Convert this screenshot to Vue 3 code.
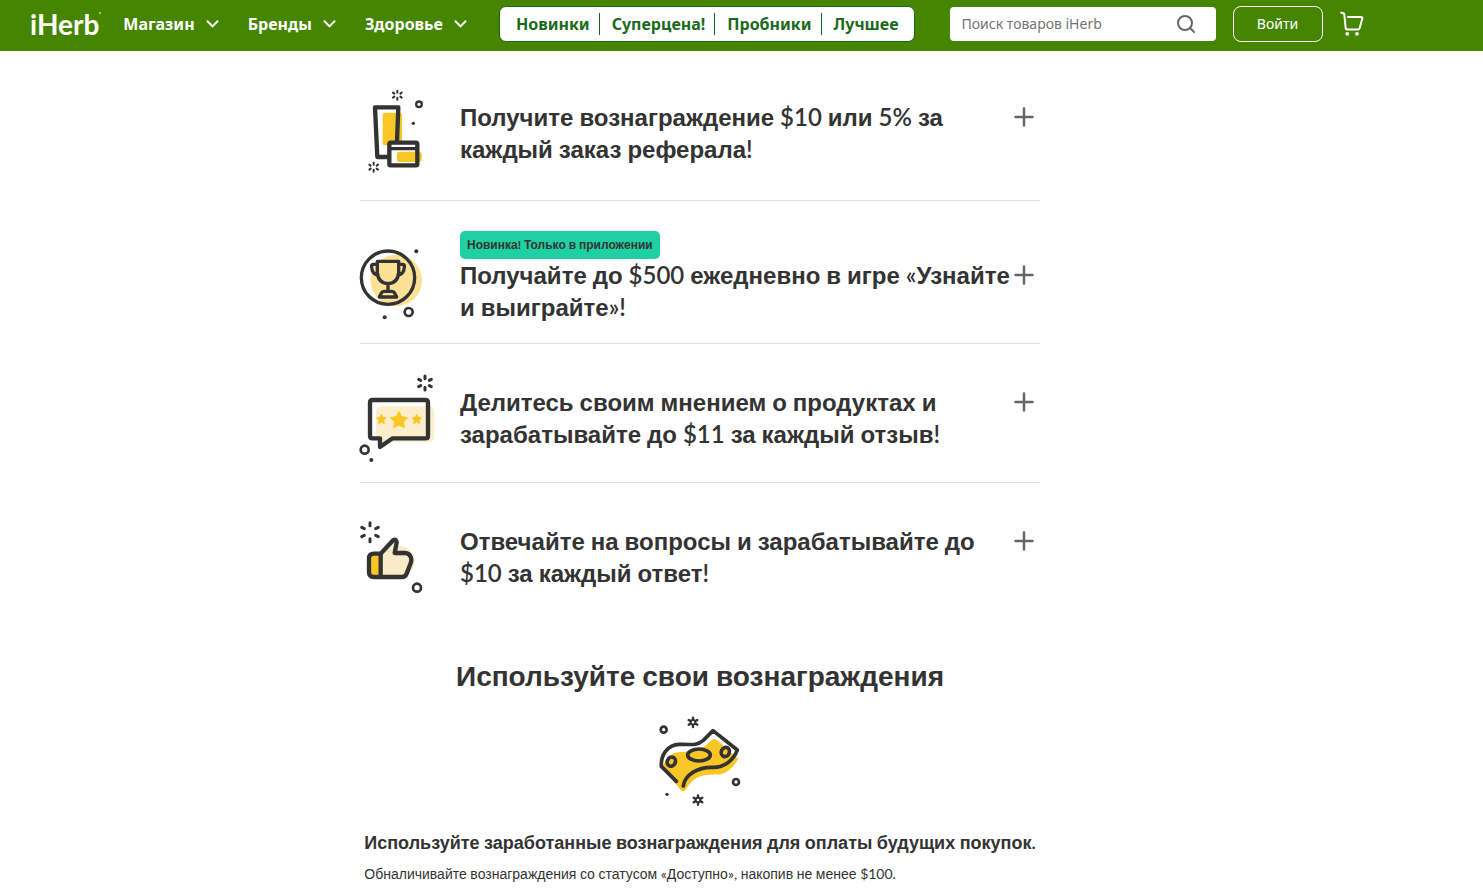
<script setup>
const menus = ['Магазин', 'Бренды', 'Здоровье']
const quickLinks = ['Новинки', 'Суперцена!', 'Пробники', 'Лучшее']

const rewards = [
  { id: 'referral', title: 'Получите вознаграждение $10 или 5% за каждый заказ реферала!' },
  {
    id: 'trophy',
    title: 'Получайте до $500 ежедневно в игре «Узнайте и выиграйте»!',
    badge: 'Новинка! Только в приложении',
  },
  { id: 'review', title: 'Делитесь своим мнением о продуктах и зарабатывайте до $11 за каждый отзыв!' },
  { id: 'answer', title: 'Отвечайте на вопросы и зарабатывайте до $10 за каждый ответ!' },
]

const heading = 'Используйте свои вознаграждения'
const lead = 'Используйте заработанные вознаграждения для оплаты будущих покупок.'
const note = 'Обналичивайте вознаграждения со статусом «Доступно», накопив не менее $100.'

// Splits a string into Cyrillic words and everything else, so each gets its own typeface.
function runs(text) {
  return text
    .split(/([А-Яа-яЁё]+)/)
    .filter(Boolean)
    .map((t) => ({ t, cyr: /[А-Яа-яЁё]/.test(t) }))
}
</script>

<template>
  <div class="page">
    <header class="header">
      <div class="bar">
        <a class="logo" href="#" aria-label="iHerb">iHerb<i class="reg"></i></a>
        <nav class="menus">
          <button v-for="m in menus" :key="m" class="menu" type="button">
            <span>{{ m }}</span>
            <svg class="chev" viewBox="0 0 12 8"><path d="M1 1.2 6 6.4 11 1.2" /></svg>
          </button>
        </nav>
        <nav class="quick">
          <a v-for="q in quickLinks" :key="q" class="quick-link" href="#">{{ q }}</a>
        </nav>
        <form class="search" @submit.prevent>
          <input class="search-input" type="text" placeholder="Поиск товаров iHerb" aria-label="Поиск товаров iHerb" />
          <button class="search-btn" type="submit" aria-label="Поиск">
            <svg class="search-icon" viewBox="0 0 20 20"><circle cx="9" cy="9" r="7" /><path d="M14 14 18 18" /></svg>
          </button>
        </form>
        <button class="signin" type="button">Войти</button>
        <a class="cart" href="#" aria-label="Корзина">
          <svg class="cart-icon" viewBox="0 0 24 26">
            <path d="M1.2 1.6 3.4 2.2Q4.2 2.5 4.3 3.4L5.6 16.6Q5.8 18.6 7.6 18.6H17.8Q19.2 18.6 19.6 17.2L22.3 7.6Q22.6 6 21 6H8" />
            <circle class="wheel" cx="7.2" cy="22.8" r="1.9" /><circle class="wheel" cx="17" cy="22.8" r="1.9" />
          </svg>
        </a>
      </div>
    </header>

    <main class="main">
      <section class="column">
        <article v-for="r in rewards" :key="r.id" class="reward" :class="{ badged: r.badge }">
          <div class="art">
            <svg v-if="r.id === 'referral'" class="pic" viewBox="30 27 240 273">
              <rect x="98" y="98" width="58" height="98" rx="8" fill="#fac626" />
              <path d="M141 184 145 82H75L82 231H116" class="ln" stroke-width="13" />
              <rect x="118" y="188" width="84" height="68" rx="4" fill="#fff" />
              <rect x="141" y="215" width="74" height="31" rx="8" fill="#fac626" />
              <rect x="118" y="188" width="84" height="68" rx="4" class="ln" stroke-width="13" />
              <path d="M118 206H202" class="ln" stroke-width="10" />
              <circle cx="207" cy="73" r="8.5" class="ln" stroke-width="7" />
              <circle cx="190" cy="130" r="5" class="dot" />
              <path class="ln" stroke-width="6" d="M142 32v6M142 53v6M129 38l4 3M155 38l-4 3M129 53l4-3M155 53l-4-3" />
              <path class="ln" stroke-width="6" d="M71 248v6M71 269v6M58 254l4 3M84 254l-4 3M58 269l4-3M84 269l-4-3" />
            </svg>
            <svg v-else-if="r.id === 'trophy'" class="pic" viewBox="30 18 240 276">
              <circle cx="139" cy="166" r="77" fill="#fce093" />
              <circle cx="114" cy="158" r="80" class="ln" stroke-width="10" />
              <path class="ln" stroke-width="10" d="M82 109H146V143Q144 174 114 176 84 174 82 143ZM114 177V198M82 118H70Q64 118 65 126 66 148 84 150M146 118H158Q164 118 163 126 162 148 144 150M104 199H124Q132 199 135 206L140 216H88L93 206Q96 199 104 199Z" />
              <circle cx="199" cy="79" r="6" class="dot" />
              <circle cx="104" cy="277" r="6" class="dot" />
              <circle cx="176" cy="261" r="12" class="ln" stroke-width="8" />
            </svg>
            <svg v-else-if="r.id === 'review'" class="pic" viewBox="30 27 240 264">
              <rect x="78" y="124" width="174" height="107" rx="16" fill="#fdeecb" />
              <path class="ln" stroke-width="13" d="M128 220H227Q234 220 234 212V113Q234 105 226 105H68Q60 105 60 113V212Q60 220 68 220H90V246Z" />
              <path class="star" d="M147 139 155 155 173 158 160 171 163 188 147 180 131 188 134 171 121 158 139 155Z" />
              <path class="star" d="M94 148 99 157 108 159 101 166 103 176 94 171 85 176 87 166 80 159 89 157Z" />
              <path class="star" d="M200 148 205 157 214 159 207 166 209 176 200 171 191 176 193 166 186 159 195 157Z" />
              <path class="ln" stroke-width="9" d="M225 33v8M225 67v8M206 43l6 3M244 43l-6 3M206 65l6-3M244 65l-6-3" />
              <circle cx="44" cy="254" r="12" class="ln" stroke-width="8" />
              <circle cx="64" cy="285" r="6" class="dot" />
            </svg>
            <svg v-else class="pic" viewBox="30 9 240 270">
              <circle cx="148" cy="154" r="46" fill="#f9ebc8" />
              <path d="M94 134 124 92Q136 80 138 98L134 128H166Q190 132 184 154L170 190Q167 200 156 200H94Z" fill="#f9ebc8" />
              <path d="M92 131H68Q56 132 56 144V188Q56 200 68 201H92Z" fill="#fac626" />
              <path class="ln" stroke-width="13" d="M92 131H72Q57 131 57 146V187Q57 201 72 201H156Q166 201 170 191L183 157Q185 149 183 143 178 129 165 129H134L140 98Q139 86 130 90L92 131V200" />
              <path class="ln" stroke-width="9" d="M60 38v9M60 86v9M35 52l8 4M85 52l-8 4M35 80l8-4M85 80l-8-4" />
              <circle cx="201" cy="233" r="12" class="ln" stroke-width="8" />
            </svg>
          </div>
          <div class="copy">
            <span v-if="r.badge" class="badge"><span v-for="(s, i) in runs(r.badge)" :key="i" :class="{ cyr: s.cyr }">{{ s.t }}</span></span>
            <h3 class="title"><span v-for="(s, i) in runs(r.title)" :key="i" :class="{ cyr: s.cyr }">{{ s.t }}</span></h3>
          </div>
          <button class="toggle" type="button" :aria-label="r.title">
            <svg class="plus" viewBox="0 0 20 20"><path d="M10 1.5V18.5M1.5 10H18.5" /></svg>
          </button>
        </article>
      </section>

      <section class="use">
        <h2 class="heading"><span v-for="(s, i) in runs(heading)" :key="i" :class="{ cyr: s.cyr }">{{ s.t }}</span></h2>
        <svg class="money" viewBox="60 48 240 270">
          <path d="M66 202C86 158 104 156 134 155 184 156 198 134 216 120Q224 114 232 121L294 176C284 200 258 222 236 224 190 222 160 228 138 268Q132 278 122 270Z" fill="#fac626" />
          <path class="ln" stroke-width="11" d="M109 244 64 199C62 168 80 134 118 133 160 134 172 136 190 121L219 92 292 150C280 182 252 202 220 202 172 200 134 226 130 258" />
          <ellipse cx="177" cy="165" rx="34" ry="18" class="ln" stroke-width="11" />
          <ellipse cx="94" cy="185" rx="12" ry="14" class="ln" stroke-width="11" transform="rotate(25 94 185)" />
          <ellipse cx="256" cy="156" rx="12" ry="14" class="ln" stroke-width="11" transform="rotate(25 256 156)" />
          <circle cx="71" cy="89" r="9" class="ln" stroke-width="8" />
          <circle cx="288" cy="246" r="9" class="ln" stroke-width="8" />
          <circle cx="81" cy="283" r="5" class="dot" />
          <g v-for="p in ['translate(159 67)', 'translate(174 300)']" :key="p" :transform="p">
            <circle r="7" class="ln" stroke-width="6" />
            <path class="ln" stroke-width="7" d="M0-8V-14M0 8V14M-8-4l-5-3M8-4l5-3M-8 4l-5 3M8 4l5 3" />
          </g>
        </svg>
        <div class="text">
          <p class="lead"><span v-for="(s, i) in runs(lead)" :key="i" :class="{ cyr: s.cyr }">{{ s.t }}</span></p>
          <p class="note"><span v-for="(s, i) in runs(note)" :key="i" :class="{ cyr: s.cyr }">{{ s.t }}</span></p>
        </div>
      </section>
    </main>
  </div>
</template>

<style>
body {
  background: #fff;
}
</style>

<style scoped>
* {
  box-sizing: border-box;
}
.page {
  font-family: Lato, 'Liberation Sans', sans-serif;
  color: #333;
}
.cyr {
  font-family: 'Liberation Sans', sans-serif;
  line-height: 1;
}
button {
  margin: 0;
  padding: 0;
  border: 0;
  background: none;
  color: inherit;
  font: inherit;
  cursor: pointer;
}
a {
  color: inherit;
  text-decoration: none;
}
.header {
  background: #458500;
  color: #fff;
  font-family: 'Noto Sans', sans-serif;
}
.bar {
  display: flex;
  align-items: center;
  height: 51px;
  padding: 0 30px 4px;
}
.logo {
  display: flex;
  flex: 0 0 70px;
  margin-right: 22px;
  font: 700 28px/40px Lato, sans-serif;
}
.reg {
  flex: 0 0 2px;
  height: 2px;
  margin-top: 8px;
  border-radius: 50%;
  background: #c5dbac;
}
.menus {
  display: flex;
  gap: 29px;
  margin-right: 32px;
}
.menu {
  display: flex;
  align-items: center;
  gap: 11px;
  font-size: 16px;
  font-weight: 700;
  line-height: 24px;
}
.chev {
  width: 13px;
  height: 8px;
  fill: none;
  stroke: #fff;
  stroke-width: 2;
  stroke-linecap: round;
}
.quick {
  display: flex;
  align-items: center;
  height: 36px;
  padding: 0 6px 0 4px;
  border: 1px solid #1b6a1b;
  border-radius: 7px;
  background: #fff;
  color: #1b6a1b;
}
.quick-link {
  padding: 0 9px 0 12px;
  border-right: 1px solid #1b6a1b;
  font-size: 16px;
  font-weight: 700;
  line-height: 22px;
}
.quick-link:last-child {
  border-right: 0;
}
.search {
  display: flex;
  align-items: center;
  width: 266px;
  height: 34px;
  margin-left: 35px;
  padding-right: 20px;
  border-radius: 4px;
  background: #fff;
}
.search-input {
  flex: 1;
  min-width: 0;
  padding: 0 0 0 12px;
  border: 0;
  outline: 0;
  background: none;
  color: #333;
  font: 14px/20px 'Noto Sans', sans-serif;
}
.search-input::placeholder {
  color: #757575;
}
.search-icon {
  display: block;
  width: 20px;
  height: 20px;
  fill: none;
  stroke: #666;
  stroke-width: 2;
  stroke-linecap: round;
}
.signin {
  width: 90px;
  height: 36px;
  margin: 0 17px;
  border: 1px solid #fff;
  border-radius: 8px;
  font-size: 14px;
}
.cart-icon {
  display: block;
  width: 24px;
  height: 26px;
  fill: none;
  stroke: #fff;
  stroke-width: 2;
  stroke-linecap: round;
  stroke-linejoin: round;
}
.wheel {
  fill: #fff;
  stroke: none;
}
.main {
  max-width: 1400px;
  padding: 8px 20px 12px;
}
.column {
  max-width: 680px;
  margin: 0 auto;
}
.reward {
  display: flex;
  padding: 30px 0 20px;
  border-bottom: 1px solid #ddd;
}
.reward:last-child {
  border-bottom: 0;
}
.art {
  flex: 0 0 100px;
}
.pic {
  display: block;
  width: 80px;
  overflow: visible;
}
.ln {
  fill: none;
  stroke: #333;
  stroke-linecap: round;
  stroke-linejoin: round;
}
.dot {
  fill: #333;
}
.star {
  fill: #fac626;
  stroke: #fac626;
  stroke-width: 3;
  stroke-linejoin: round;
}
.copy {
  flex: 1;
  min-width: 0;
  padding-top: 12px;
}
.badged .copy {
  padding-top: 0;
}
.badge {
  display: block;
  width: fit-content;
  padding: 0 7px;
  border-radius: 5px;
  background: #1fd1a2;
  font-size: 12px;
  font-weight: 700;
  line-height: 28px;
}
.title {
  margin: 0;
  font-size: 24px;
  font-weight: 600;
  line-height: 32px;
}
.toggle {
  align-self: flex-start;
  width: 20px;
  height: 32px;
  margin: 12px 6px 0 0;
}
.badged .toggle {
  margin-top: 28px;
}
.plus {
  display: block;
  width: 20px;
  height: 20px;
  margin: auto;
  fill: none;
  stroke: #666;
  stroke-width: 2.5;
  stroke-linecap: round;
}
.use {
  display: flex;
  flex-direction: column;
  align-items: center;
  padding-top: 33px;
}
.heading {
  margin: 0 0 22px;
  font-size: 28px;
  font-weight: 600;
  line-height: 38px;
}
.money {
  width: 80px;
  overflow: visible;
}
.text {
  padding-top: 23px;
}
.lead {
  margin: 0;
  font-size: 18px;
  font-weight: 600;
  line-height: 26px;
}
.note {
  margin: 8px 0 0;
  font-size: 14px;
  line-height: 22px;
}
</style>
